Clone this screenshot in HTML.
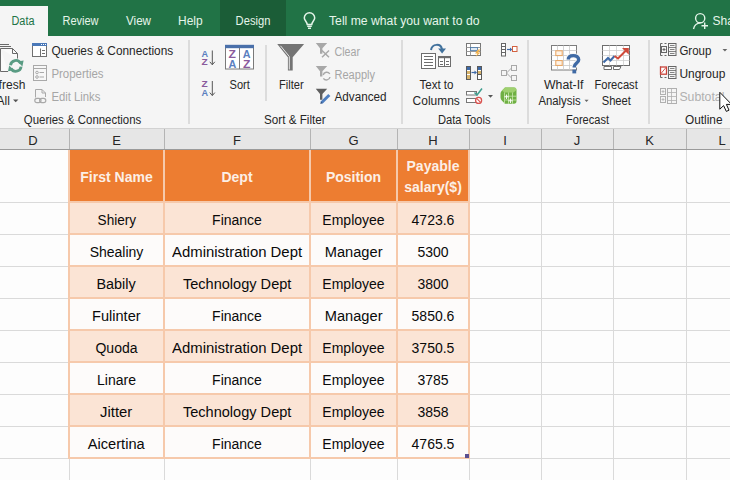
<!DOCTYPE html>
<html><head><meta charset="utf-8">
<style>
*{margin:0;padding:0;box-sizing:border-box}
html,body{width:730px;height:480px;overflow:hidden;background:#fdfdfd;font-family:"Liberation Sans",sans-serif;position:relative}
.a{position:absolute;white-space:nowrap}
.tab{position:absolute;top:13px;font-size:12px;color:#eef6f1;line-height:14px;white-space:nowrap}
.rt{position:absolute;font-size:11.7px;color:#262626;line-height:14px;white-space:nowrap}
.gl{position:absolute;font-size:11.7px;color:#262626;line-height:14px;white-space:nowrap;top:113px}
.dis{color:#a8a8a8}
.sep{position:absolute;width:1px;background:#c6c6c6}
.ch{position:absolute;top:132.5px;font-size:13px;color:#262626;line-height:16px;text-align:center}
.cell{position:absolute;font-size:14px;color:#0a0a0a;text-align:center;line-height:16px;white-space:nowrap}
.hd{position:absolute;color:#fcefe6;font-weight:bold;font-size:14px;text-align:center;line-height:21px;white-space:nowrap}
svg{position:absolute;overflow:visible}
</style></head><body>

<div class="a" style="left:0;top:0;width:730px;height:36px;background:#217346"></div>
<div class="a" style="left:0;top:6px;width:48px;height:30px;background:#f5f5f5"></div>
<div class="a" style="left:220px;top:0;width:66px;height:36px;background:#1b5d37"></div>
<div class="a" style="left:0;top:36px;width:730px;height:93px;background:#f5f5f5;border-bottom:1px solid #d2d2d2"></div>
<svg style="left:0;top:0" width="730" height="128" viewBox="0 0 730 128" font-family="Liberation Sans, sans-serif">
<!-- tab text -->
<g fill="#e6f5ea" font-size="12">
<text x="62.5" y="24.7" textLength="36" lengthAdjust="spacingAndGlyphs">Review</text>
<text x="126" y="24.7" textLength="25" lengthAdjust="spacingAndGlyphs">View</text>
<text x="178" y="24.7" textLength="24.6" lengthAdjust="spacingAndGlyphs">Help</text>
<text x="235.6" y="24.7" textLength="34.8" lengthAdjust="spacingAndGlyphs">Design</text>
<text x="329" y="25.0" textLength="150.5" lengthAdjust="spacingAndGlyphs">Tell me what you want to do</text>
<text x="712.5" y="24.7">Share</text>
</g>
<text x="11.5" y="24.7" fill="#217346" font-size="12" textLength="23" lengthAdjust="spacingAndGlyphs">Data</text>
<!-- lightbulb -->
<g fill="none" stroke="#e3f4e8" stroke-width="1.5">
<path d="M307.2 24.5 C307 21.5 304.3 20.5 304.3 18 A5.2 5.2 0 0 1 314.7 18 C314.7 20.5 312 21.5 311.8 24.5 Z"/>
<path d="M307.2 26.3H311.8 M308 28.3H311"/>
</g>
<!-- person -->
<g fill="none" stroke="#e3f4e8" stroke-width="1.4">
<circle cx="700.2" cy="18.2" r="4.6"/>
<path d="M693.5 29 C694.2 25.5 697 23.2 700.5 22.9"/>
<path d="M701.5 25.7H708 M704.7 22.5V29"/>
</g>

<!-- ===== Refresh All ===== -->
<g fill="none" stroke="#6a6a6a" stroke-width="1">
<path d="M0 44.5H9 M0 46.5H11"/>
<path d="M0.5 48.5H12.5L17.5 53.5V59 M8 71.5H0.5V48.5" fill="#fafafa"/>
<path d="M12.5 48.5V53.5H17.5"/>
</g>
<circle cx="15.8" cy="65.9" r="7.6" fill="#f5f5f5"/>
<g fill="none" stroke="#5a9c84" stroke-width="2.8">
<path d="M10.5 65.2 A5.4 5.4 0 0 1 20.6 63.3"/>
<path d="M21.1 66.6 A5.4 5.4 0 0 1 11 68.5"/>
</g>
<path d="M17.6 61.6 L23.6 60.6 L22.4 66.4 Z M14 70.2 L8 71.2 L9.2 65.4 Z" fill="#5a9c84"/>
<g fill="#262626" font-size="12">
<text x="25.3" y="89.0" text-anchor="end">Refresh</text>
<text x="9.8" y="105.1" text-anchor="end">All</text>
</g>
<path d="M13 99.5H18.4L15.7 102.3Z" fill="#555"/>

<!-- Queries & Connections icons -->
<g fill="none" stroke="#707070" stroke-width="1">
<rect x="32.5" y="45.5" width="14" height="11" fill="#fff"/>
<path d="M40.5 48.5V56.5 M42 50.5H45 M42 53.5H45"/>
</g>
<rect x="32" y="43" width="15" height="3" fill="#4a78b8"/>
<path d="M41 44.5h1 M43 44.5h1 M45 44.5h1" stroke="#fff" stroke-width="1"/>
<g fill="none" stroke="#a9a9a9" stroke-width="1">
<rect x="33.5" y="65.5" width="13" height="15" fill="#f7f7f7"/>
<path d="M33.5 68.5H46.5"/>
<circle cx="37" cy="72.5" r="1.3"/><circle cx="37" cy="77" r="1.3"/>
<path d="M39.5 72.5H44 M39.5 77H44"/>
</g>
<g fill="none" stroke="#a9a9a9" stroke-width="1">
<path d="M35.5 97.5V89.5H42L45.5 93V97 M42 89.5V93H45.5"/>
<rect x="34.8" y="98.3" width="6.2" height="4.4" rx="2.2" stroke-width="1.2"/>
<rect x="39.6" y="98.3" width="6.2" height="4.4" rx="2.2" stroke-width="1.2"/>
</g>
<g font-size="12">
<text x="51.4" y="55.2" fill="#262626" textLength="121.8" lengthAdjust="spacingAndGlyphs">Queries &amp; Connections</text>
<text x="51.4" y="77.8" fill="#a6a6a6" textLength="52.2" lengthAdjust="spacingAndGlyphs">Properties</text>
<text x="51.4" y="101.1" fill="#a6a6a6" textLength="49" lengthAdjust="spacingAndGlyphs">Edit Links</text>
<text x="23.8" y="124.2" fill="#262626" textLength="117.5" lengthAdjust="spacingAndGlyphs">Queries &amp; Connections</text>
</g>

<!-- separators -->
<g fill="#c4c4c4">
<rect x="188.5" y="40" width="1" height="84"/>
<rect x="265.5" y="45" width="1" height="56"/>
<rect x="401.5" y="40" width="1" height="84"/>
<rect x="527.5" y="40" width="1" height="84"/>
<rect x="648.5" y="40" width="1" height="84"/>
</g>

<!-- Sort & Filter -->
<g font-family="Liberation Sans" font-weight="bold" font-size="9.6">
<text x="201.4" y="57.0" fill="#5b7fbf" textLength="6.6" lengthAdjust="spacingAndGlyphs">A</text>
<text x="201.6" y="65.2" fill="#8a5a9c" textLength="6.2" lengthAdjust="spacingAndGlyphs">Z</text>
<text x="201.6" y="87.2" fill="#8a5a9c" textLength="6.2" lengthAdjust="spacingAndGlyphs">Z</text>
<text x="201.4" y="95.8" fill="#5b7fbf" textLength="6.6" lengthAdjust="spacingAndGlyphs">A</text>
</g>
<g fill="none" stroke="#555" stroke-width="1">
<path d="M212.3 50.5V64.5 M209.8 61.8L212.3 64.8L214.8 61.8"/>
<path d="M212.3 81V95.3 M209.8 92.6L212.3 95.6L214.8 92.6"/>
</g>
<rect x="225.5" y="45.5" width="28" height="23.5" fill="#fff" stroke="#7a7a7a" stroke-width="1"/>
<rect x="225" y="44.8" width="29" height="3.4" fill="#4a70aa"/>
<path d="M239.5 48V69" stroke="#7a7a7a"/>
<g font-family="Liberation Sans" font-weight="bold" font-size="10.6">
<text x="228.6" y="57.6" fill="#8a5a9c" textLength="7.4" lengthAdjust="spacingAndGlyphs">Z</text>
<text x="228.4" y="67.6" fill="#5b7fbf" textLength="7.8" lengthAdjust="spacingAndGlyphs">A</text>
<text x="242.8" y="57.6" fill="#5b7fbf" textLength="7.8" lengthAdjust="spacingAndGlyphs">A</text>
<text x="243" y="67.6" fill="#8a5a9c" textLength="7.4" lengthAdjust="spacingAndGlyphs">Z</text>
</g>
<!-- big funnel -->
<path d="M277.2 44.1H304.1L292.7 57.2V70.5H287.9V57.2Z" fill="#747474"/>
<path d="M280.5 45.8L289.3 56.5V69.5" fill="none" stroke="#f5f5f5" stroke-width="0.9"/>
<!-- small funnels -->
<path d="M315.8 43H327.2L322.4 48.3V53.8H320V48.3Z" fill="#a8a8a8"/>
<path d="M322 50.5L329 57.2 M329 50.5L322 57.2" stroke="#a8a8a8" stroke-width="1.5"/>
<path d="M315.8 66H327.2L322.4 71.3V76.5H320V71.3Z" fill="#a8a8a8"/>
<g fill="none" stroke="#a8a8a8" stroke-width="1.4"><path d="M323.2 75 A3.6 3.6 0 0 1 329.8 74"/><path d="M330 77 A3.6 3.6 0 0 1 323.4 78.3"/></g>
<path d="M315.8 88.8H327.2L322.4 94.1V99.8H320V94.1Z" fill="#5f5f5f"/>
<path d="M321.5 102.8L329.3 95" stroke="#4f7fc0" stroke-width="3"/>
<path d="M320.5 103.5l1.5-1.2" stroke="#2d4f80" stroke-width="1.5"/>
<g font-size="12">
<text x="229.5" y="89.0" fill="#262626" textLength="20.3" lengthAdjust="spacingAndGlyphs">Sort</text>
<text x="279" y="89.2" fill="#262626" textLength="24.7" lengthAdjust="spacingAndGlyphs">Filter</text>
<text x="334.5" y="55.8" fill="#a6a6a6" textLength="25.5" lengthAdjust="spacingAndGlyphs">Clear</text>
<text x="334.5" y="78.5" fill="#a6a6a6" textLength="40.5" lengthAdjust="spacingAndGlyphs">Reapply</text>
<text x="334.5" y="101.4" fill="#262626" textLength="52" lengthAdjust="spacingAndGlyphs">Advanced</text>
<text x="264" y="124.4" fill="#262626" textLength="61.6" lengthAdjust="spacingAndGlyphs">Sort &amp; Filter</text>
</g>

<!-- Data Tools -->
<rect x="421.5" y="53.5" width="14" height="15" fill="#fff" stroke="#6d6d6d"/>
<path d="M424 56.5H433 M424 59.5H433 M424 62.5H433 M424 65.5H433" stroke="#6d6d6d" stroke-width="1"/>
<rect x="438.5" y="56.5" width="12" height="10" fill="#fff" stroke="#6d6d6d"/>
<rect x="438" y="56" width="13" height="2.2" fill="#6d6d6d"/>
<path d="M444.5 58V66.5 M440 61.5H443 M446 61.5H449 M440 64.5H443 M446 64.5H449" stroke="#6d6d6d" stroke-width="1"/>
<path d="M431 50 C432 43.5 441 43 442 49.5" fill="none" stroke="#41719c" stroke-width="2"/>
<path d="M438.2 48.6H446L442.1 53.5Z" fill="#41719c"/>
<!-- flash fill -->
<rect x="466.5" y="43.5" width="14" height="12" fill="#fff" stroke="#777"/>
<path d="M466.5 47.5H480.5 M466.5 51.5H480.5 M470.5 43.5V55.5" stroke="#999" stroke-width="1"/>
<rect x="470.5" y="47.5" width="7" height="3" fill="#dfe9f3" stroke="#4a78a8" stroke-width="0.8"/>
<path d="M478 49.5L475 53.5H477.5L475.5 57L480.5 52.5H478L480.5 49.5Z" fill="#f2b14a"/>
<!-- remove duplicates -->
<rect x="466.5" y="66.5" width="4" height="13" fill="#fff" stroke="#5a5a5a"/>
<rect x="467" y="67" width="3" height="3" fill="#3e6aa8"/>
<rect x="467" y="71" width="3" height="3" fill="#d7b36b"/>
<rect x="467" y="75" width="3" height="4" fill="#d7b36b"/>
<rect x="477.5" y="66.5" width="4" height="13" fill="#fff" stroke="#5a5a5a"/>
<rect x="478" y="67" width="3" height="3" fill="#3e6aa8"/>
<rect x="478" y="71" width="3" height="3" fill="#d7b36b"/>
<path d="M478 74.5H481" stroke="#5a5a5a"/>
<path d="M471.5 72.5H475" stroke="#3e6aa8" stroke-width="1.2"/><path d="M474.5 70.5L477 72.5L474.5 74.5Z" fill="#3e6aa8"/>
<!-- data validation -->
<rect x="466.5" y="91.5" width="10" height="3.5" fill="#fff" stroke="#777"/>
<rect x="466.5" y="98.5" width="10" height="4" fill="#fff" stroke="#777"/>
<path d="M474.5 92.5L477 95L482 88.5" fill="none" stroke="#3f9f8f" stroke-width="1.5"/>
<circle cx="478.6" cy="100.4" r="3" fill="#fff" stroke="#d9534f" stroke-width="1.3"/>
<path d="M476.6 98.4L480.6 102.4" stroke="#d9534f" stroke-width="1.2"/>
<path d="M488 95H493L490.5 97.8Z" fill="#555"/>
<!-- consolidate -->
<rect x="501.5" y="43.5" width="4" height="12.5" fill="#fff" stroke="#666"/>
<path d="M501.5 46.5H505.5 M501.5 49.5H505.5 M501.5 52.5H505.5" stroke="#666"/>
<path d="M507 49.5H510.5" stroke="#3e6aa8" stroke-width="1.2"/><path d="M510 47.5L512.3 49.5L510 51.5Z" fill="#3e6aa8"/>
<rect x="512.5" y="46.5" width="4.5" height="5" fill="#fff" stroke="#d2603f" stroke-width="1"/>
<!-- relationships -->
<g fill="none" stroke="#a8a8a8" stroke-width="1">
<rect x="501.5" y="70.5" width="5" height="5"/>
<rect x="511.5" y="65.5" width="5" height="5"/>
<rect x="511.5" y="75.5" width="5" height="5"/>
<path d="M506.5 73L511.5 68 M506.5 73L511.5 78"/>
</g>
<!-- data model -->
<path d="M502 90.5 L505 87.6 H514 Q516.5 87.6 516.5 90 V101 Q516.5 103.8 514 103.8 H505 L502 100.8 Q500.5 99.5 500.5 97.5 V93.5 Q500.5 91.8 502 90.5Z" fill="#6fb043"/>
<path d="M502 90.5 L505 87.6 H514 Q516.5 87.6 516.5 90 L513.5 92.5 H504.5Z" fill="#9fd06f"/>
<path d="M504.5 92.5V103.8 M508.5 92.5V103.8 M512.5 92.5V103.8 M504.5 96.2H516.5 M504.5 100H516.5" stroke="#c9e7ad" stroke-width="0.8"/>
<path d="M506.5 94.5V99 M504.3 96.8H508.7 M510.5 98.5V103 M508.3 100.8H512.7" stroke="#ffffff" stroke-width="0.9"/>
<g font-size="12" fill="#262626">
<text x="419.5" y="89.1" textLength="34" lengthAdjust="spacingAndGlyphs">Text to</text>
<text x="412.6" y="105.1" textLength="47.2" lengthAdjust="spacingAndGlyphs">Columns</text>
<text x="438" y="124.4" textLength="52.5" lengthAdjust="spacingAndGlyphs">Data Tools</text>
</g>

<!-- Forecast -->
<g stroke="#8c8c8c" stroke-width="0.8" fill="none">
<rect x="551.5" y="45.5" width="25" height="24.5" fill="#fff" stroke="#7d7d7d" stroke-width="1"/>
<path d="M551.5 50.5H576.5 M551.5 55.5H576.5 M551.5 60.5H576.5 M551.5 65.5H576.5 M557.5 45.5V70 M563.5 45.5V70 M569.5 45.5V70" stroke="#c9c9c9"/>
</g>
<rect x="555.8" y="50.8" width="6.4" height="4.8" fill="#fff3e6" stroke="#e8a25c" stroke-width="1"/>
<rect x="555.8" y="60.6" width="6.4" height="4.8" fill="#fff3e6" stroke="#e8a25c" stroke-width="1"/>
<path d="M568.3 59.6 C568.3 56 570.6 55.6 573.3 55.6 C576.3 55.6 578.7 57.2 578.7 59.8 C578.7 63 574.3 63.6 574.3 66.6 V67.6" fill="none" stroke="#f5f5f5" stroke-width="5.4"/>
<path d="M568.3 59.6 C568.3 56 570.6 55.6 573.3 55.6 C576.3 55.6 578.7 57.2 578.7 59.8 C578.7 63 574.3 63.6 574.3 66.6 V67.6" fill="none" stroke="#3f6aa5" stroke-width="3.4"/>
<rect x="572.4" y="69.6" width="3.8" height="3.8" fill="#3f6aa5"/>
<rect x="602.5" y="45.5" width="27" height="20" fill="#fff" stroke="#6d6d6d"/>
<path d="M602.5 50.5H629.5 M602.5 55.5H629.5 M602.5 60.5H629.5 M609.5 45.5V65.5 M616.5 45.5V65.5 M623.5 45.5V65.5" stroke="#cfcfcf" stroke-width="0.8"/>
<path d="M604 66.5H611.5V69.5H604Z M613.5 66.5H621L619.5 69.5H613.5Z" fill="#fff" stroke="#6d6d6d" stroke-width="1"/>
<path d="M603.5 62.5L608 58L610.5 60.5L614.5 56" fill="none" stroke="#3e6aa8" stroke-width="2"/>
<path d="M614.5 56L618 58.5L626 50.5" fill="none" stroke="#d04a3a" stroke-width="2"/>
<path d="M622 48H628.8V54.8Z" fill="#d04a3a"/>
<g font-size="12" fill="#262626">
<text x="544" y="89.1" textLength="39.5" lengthAdjust="spacingAndGlyphs">What-If</text>
<text x="538.4" y="105.1" textLength="42.2" lengthAdjust="spacingAndGlyphs">Analysis</text>
<text x="594.4" y="89.1" textLength="43.4" lengthAdjust="spacingAndGlyphs">Forecast</text>
<text x="601.7" y="105.1" textLength="29.2" lengthAdjust="spacingAndGlyphs">Sheet</text>
<text x="566" y="124.4" textLength="43" lengthAdjust="spacingAndGlyphs">Forecast</text>
</g>
<path d="M584.5 99.8H588.6L586.55 102Z" fill="#666"/>

<!-- Outline -->
<g fill="none" stroke="#666" stroke-width="1">
<path d="M662.5 43.5H660.5V55.5H662.5 M664.5 43.5H666.5 M664.5 55.5H666.5"/>
<rect x="661.5" y="46.5" width="5" height="6"/>
<path d="M662.5 49.5H665.5 M664 48V51" stroke-width="1"/>
<rect x="668.5" y="43.5" width="7.5" height="12"/>
<path d="M668.5 47.5H676 M668.5 51.5H676 M670 45.5H674.5 M670 49.5H674.5 M670 53.5H674.5" stroke-width="0.8"/>
<path d="M662.5 77.5H660.5V66.5 M664.5 77.5H666.5"/>
<rect x="668.5" y="66.5" width="7.5" height="12"/>
<path d="M668.5 70.5H676 M668.5 74.5H676 M670 68.5H674.5 M670 72.5H674.5 M670 76.5H674.5" stroke-width="0.8"/>
</g>
<rect x="660.5" y="67" width="6" height="7.2" fill="#fff" stroke="#c9433a" stroke-width="1.3"/>
<path d="M661 73.5L666 67.5" stroke="#c9433a" stroke-width="0.9"/>
<g fill="none" stroke="#b0b0b0" stroke-width="1">
<rect x="660.5" y="88.5" width="5" height="6"/><rect x="660.5" y="96.5" width="5" height="6"/>
<rect x="667.5" y="88.5" width="9" height="15"/>
<path d="M667.5 92.5H676.5 M667.5 96.5H676.5 M667.5 100.5H676.5 M671.5 88.5V103.5 M661.5 91.5H664.5 M663 90V93 M661.5 99.5H664.5 M663 98V101" stroke-width="0.8"/>
</g>
<g font-size="12">
<text x="679.4" y="55.4" fill="#262626" textLength="31.9" lengthAdjust="spacingAndGlyphs">Group</text>
<text x="679.4" y="78.0" fill="#262626" textLength="45.9" lengthAdjust="spacingAndGlyphs">Ungroup</text>
<text x="679.4" y="101.2" fill="#b0b0b0" textLength="45" lengthAdjust="spacingAndGlyphs">Subtotal</text>
<text x="685" y="124.4" fill="#262626" textLength="37.5" lengthAdjust="spacingAndGlyphs">Outline</text>
</g>
<path d="M722.5 49H727.3L724.9 51.6Z" fill="#666"/>
<!-- cursor -->
<path d="M719.8 92.3V109.2L723.6 105.6L726.3 111.4L729 110.2L726.4 104.4H731.6Z" fill="#fff" stroke="#111" stroke-width="1"/>
</svg>

<div class="a" style="left:0;top:129px;width:730px;height:21px;background:#e6e6e6;border-bottom:1px solid #9a9a9a"></div>
<div class="ch" style="left:-3px;width:72px">D</div>
<div class="a" style="left:69px;top:129px;width:1px;height:20px;background:#b4b4b4"></div>
<div class="ch" style="left:69px;width:95px">E</div>
<div class="a" style="left:164px;top:129px;width:1px;height:20px;background:#b4b4b4"></div>
<div class="ch" style="left:164px;width:146px">F</div>
<div class="a" style="left:310px;top:129px;width:1px;height:20px;background:#b4b4b4"></div>
<div class="ch" style="left:310px;width:87px">G</div>
<div class="a" style="left:397px;top:129px;width:1px;height:20px;background:#b4b4b4"></div>
<div class="ch" style="left:397px;width:72px">H</div>
<div class="a" style="left:469px;top:129px;width:1px;height:20px;background:#b4b4b4"></div>
<div class="ch" style="left:469px;width:72px">I</div>
<div class="a" style="left:541px;top:129px;width:1px;height:20px;background:#b4b4b4"></div>
<div class="ch" style="left:541px;width:72px">J</div>
<div class="a" style="left:613px;top:129px;width:1px;height:20px;background:#b4b4b4"></div>
<div class="ch" style="left:613px;width:73px">K</div>
<div class="a" style="left:686px;top:129px;width:1px;height:20px;background:#b4b4b4"></div>
<div class="ch" style="left:686px;width:72px">L</div>
<div class="a" style="left:69px;top:150px;width:1px;height:330px;background:#dadada"></div>
<div class="a" style="left:164px;top:150px;width:1px;height:330px;background:#dadada"></div>
<div class="a" style="left:310px;top:150px;width:1px;height:330px;background:#dadada"></div>
<div class="a" style="left:397px;top:150px;width:1px;height:330px;background:#dadada"></div>
<div class="a" style="left:469px;top:150px;width:1px;height:330px;background:#dadada"></div>
<div class="a" style="left:541px;top:150px;width:1px;height:330px;background:#dadada"></div>
<div class="a" style="left:613px;top:150px;width:1px;height:330px;background:#dadada"></div>
<div class="a" style="left:686px;top:150px;width:1px;height:330px;background:#dadada"></div>
<div class="a" style="left:0;top:202px;width:730px;height:1px;background:#dadada"></div>
<div class="a" style="left:0;top:234px;width:730px;height:1px;background:#dadada"></div>
<div class="a" style="left:0;top:266px;width:730px;height:1px;background:#dadada"></div>
<div class="a" style="left:0;top:298px;width:730px;height:1px;background:#dadada"></div>
<div class="a" style="left:0;top:330px;width:730px;height:1px;background:#dadada"></div>
<div class="a" style="left:0;top:362px;width:730px;height:1px;background:#dadada"></div>
<div class="a" style="left:0;top:394px;width:730px;height:1px;background:#dadada"></div>
<div class="a" style="left:0;top:426px;width:730px;height:1px;background:#dadada"></div>
<div class="a" style="left:0;top:458px;width:730px;height:1px;background:#dadada"></div>
<div class="a" style="left:0;top:490px;width:730px;height:1px;background:#dadada"></div>
<div class="a" style="left:69px;top:150px;width:400px;height:52px;background:#ed7d31"></div>
<div class="a" style="left:69px;top:202px;width:400px;height:32px;background:#fbe4d5"></div>
<div class="a" style="left:69px;top:234px;width:400px;height:32px;background:#fdfbfa"></div>
<div class="a" style="left:69px;top:266px;width:400px;height:32px;background:#fbe4d5"></div>
<div class="a" style="left:69px;top:298px;width:400px;height:32px;background:#fdfbfa"></div>
<div class="a" style="left:69px;top:330px;width:400px;height:32px;background:#fbe4d5"></div>
<div class="a" style="left:69px;top:362px;width:400px;height:32px;background:#fdfbfa"></div>
<div class="a" style="left:69px;top:394px;width:400px;height:32px;background:#fbe4d5"></div>
<div class="a" style="left:69px;top:426px;width:400px;height:32px;background:#fdfbfa"></div>
<div class="a" style="left:68px;top:150px;width:2px;height:309px;background:#f6c9ab"></div>
<div class="a" style="left:163px;top:150px;width:2px;height:309px;background:#f6c9ab"></div>
<div class="a" style="left:309px;top:150px;width:2px;height:309px;background:#f6c9ab"></div>
<div class="a" style="left:396px;top:150px;width:2px;height:309px;background:#f6c9ab"></div>
<div class="a" style="left:468px;top:150px;width:2px;height:309px;background:#f6c9ab"></div>
<div class="a" style="left:69px;top:201px;width:400px;height:2px;background:#f6c9ab"></div>
<div class="a" style="left:69px;top:233px;width:400px;height:2px;background:#f6c9ab"></div>
<div class="a" style="left:69px;top:265px;width:400px;height:2px;background:#f6c9ab"></div>
<div class="a" style="left:69px;top:297px;width:400px;height:2px;background:#f6c9ab"></div>
<div class="a" style="left:69px;top:329px;width:400px;height:2px;background:#f6c9ab"></div>
<div class="a" style="left:69px;top:361px;width:400px;height:2px;background:#f6c9ab"></div>
<div class="a" style="left:69px;top:393px;width:400px;height:2px;background:#f6c9ab"></div>
<div class="a" style="left:69px;top:425px;width:400px;height:2px;background:#f6c9ab"></div>
<div class="a" style="left:69px;top:457px;width:400px;height:2px;background:#f6c9ab"></div>
<div class="hd" style="left:69px;top:167px;width:95px">First Name</div>
<div class="hd" style="left:164px;top:167px;width:146px">Dept</div>
<div class="hd" style="left:310px;top:167px;width:87px">Position</div>
<div class="hd" style="left:397px;top:156px;width:72px">Payable<br>salary($)</div>
<div class="cell" style="left:69px;top:211.7px;width:95px"><span style="display:inline-block;transform:scaleX(0.97)">Shiery</span></div>
<div class="cell" style="left:164px;top:211.7px;width:146px">Finance</div>
<div class="cell" style="left:310px;top:211.7px;width:87px">Employee</div>
<div class="cell" style="left:397px;top:211.7px;width:72px">4723.6</div>
<div class="cell" style="left:69px;top:243.7px;width:95px">Shealiny</div>
<div class="cell" style="left:164px;top:243.7px;width:146px"><span style="display:inline-block;transform:scaleX(1.064)">Administration Dept</span></div>
<div class="cell" style="left:310px;top:243.7px;width:87px"><span style="display:inline-block;transform:scaleX(1.045)">Manager</span></div>
<div class="cell" style="left:397px;top:243.7px;width:72px">5300</div>
<div class="cell" style="left:69px;top:275.7px;width:95px"><span style="display:inline-block;transform:scaleX(1.03)">Babily</span></div>
<div class="cell" style="left:164px;top:275.7px;width:146px"><span style="display:inline-block;transform:scaleX(1.04)">Technology Dept</span></div>
<div class="cell" style="left:310px;top:275.7px;width:87px">Employee</div>
<div class="cell" style="left:397px;top:275.7px;width:72px">3800</div>
<div class="cell" style="left:69px;top:307.7px;width:95px"><span style="display:inline-block;transform:scaleX(1.04)">Fulinter</span></div>
<div class="cell" style="left:164px;top:307.7px;width:146px">Finance</div>
<div class="cell" style="left:310px;top:307.7px;width:87px"><span style="display:inline-block;transform:scaleX(1.045)">Manager</span></div>
<div class="cell" style="left:397px;top:307.7px;width:72px">5850.6</div>
<div class="cell" style="left:69px;top:339.7px;width:95px">Quoda</div>
<div class="cell" style="left:164px;top:339.7px;width:146px"><span style="display:inline-block;transform:scaleX(1.064)">Administration Dept</span></div>
<div class="cell" style="left:310px;top:339.7px;width:87px">Employee</div>
<div class="cell" style="left:397px;top:339.7px;width:72px">3750.5</div>
<div class="cell" style="left:69px;top:371.7px;width:95px">Linare</div>
<div class="cell" style="left:164px;top:371.7px;width:146px">Finance</div>
<div class="cell" style="left:310px;top:371.7px;width:87px">Employee</div>
<div class="cell" style="left:397px;top:371.7px;width:72px">3785</div>
<div class="cell" style="left:69px;top:403.7px;width:95px"><span style="display:inline-block;transform:scaleX(1.06)">Jitter</span></div>
<div class="cell" style="left:164px;top:403.7px;width:146px"><span style="display:inline-block;transform:scaleX(1.04)">Technology Dept</span></div>
<div class="cell" style="left:310px;top:403.7px;width:87px">Employee</div>
<div class="cell" style="left:397px;top:403.7px;width:72px">3858</div>
<div class="cell" style="left:69px;top:435.7px;width:95px"><span style="display:inline-block;transform:scaleX(1.045)">Aicertina</span></div>
<div class="cell" style="left:164px;top:435.7px;width:146px">Finance</div>
<div class="cell" style="left:310px;top:435.7px;width:87px">Employee</div>
<div class="cell" style="left:397px;top:435.7px;width:72px">4765.5</div>
<div class="a" style="left:465px;top:454px;width:4px;height:4px;background:#5b4f8f"></div>
</body></html>
